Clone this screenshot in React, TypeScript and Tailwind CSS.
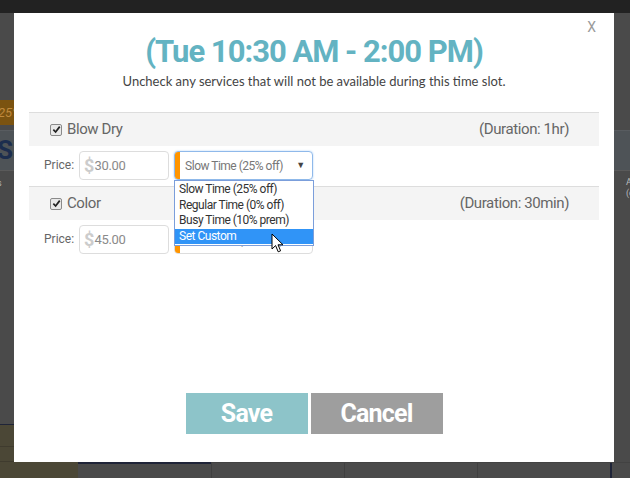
import React from 'react'

const services = [
  { name: 'Blow Dry', duration: '(Duration: 1hr)', price: '30.00', open: true },
  { name: 'Color', duration: '(Duration: 30min)', price: '45.00', open: false },
]

const options = ['Slow Time (25% off)', 'Regular Time (0% off)', 'Busy Time (10% prem)', 'Set Custom']

function CheckBox() {
  return (
    <span className="flex h-[12px] w-[12px] items-center justify-center rounded-[2px] border border-[#8a8a8a] bg-[#e9e9e9]">
      <svg width="9" height="9" viewBox="0 0 10 10">
        <path d="M1.5 5.2 L4 7.8 L8.6 1.8" fill="none" stroke="#222" strokeWidth="1.9" />
      </svg>
    </span>
  )
}

function Cursor() {
  return (
    <svg width="14" height="21" viewBox="0 0 14 21" className="absolute left-[96px] top-[52px] z-30">
      <path
        d="M1 1 L1 16 L4.6 12.6 L7.2 18.8 L9.6 17.8 L7 11.8 L12 11.8 Z"
        fill="#fff"
        stroke="#000"
        strokeWidth="1"
        strokeLinejoin="round"
      />
    </svg>
  )
}

function PriceSelect({ open }: { open: boolean }) {
  return (
    <div className="relative ml-[5px]">
      <div
        className={`flex h-[29px] w-[139px] items-center overflow-hidden rounded-[4px] border ${
          open ? 'border-[#8fb9ea] shadow-[0_0_2px_#a9cdf5]' : 'border-[#dddddd]'
        }`}
      >
        <span className="h-full w-[5px] bg-[#ff9500]" />
        <span className="ml-[5px] flex-1 text-[12px] tracking-[-0.5px] text-[#777]">Slow Time (25% off)</span>
        <span className="mr-[7px] text-[9px] text-[#444]">▼</span>
      </div>
      {open && (
        <div className="absolute left-0 top-[29px] z-20 w-[140px] border border-[#7b9edb] bg-white py-[1px]">
          {options.map((o, i) => (
            <div
              key={o}
              className={`h-[15.5px] pl-[4px] text-[12px] leading-[15.5px] tracking-[-0.5px] ${
                i === 3 ? 'bg-[#3094f7] text-white' : 'text-[#333]'
              }`}
            >
              {o}
            </div>
          ))}
          <Cursor />
        </div>
      )}
    </div>
  )
}

export default function App() {
  return (
    <div className="relative h-[478px] w-[630px] overflow-hidden bg-[#4a4a4a] font-['Roboto',sans-serif]">
      {/* page behind the overlay */}
      <div className="h-[13px] bg-[#222222]" />
      <div className="h-[87px]" />
      <div className="flex h-[25px]">
        <div className="w-[14px] overflow-hidden bg-[#7b5310] text-[13px] italic leading-[25px] text-[#c08a3c]">
          <span className="-ml-[2px] block whitespace-nowrap">25%</span>
        </div>
      </div>
      <div className="h-[5px]" />
      <div className="flex h-[40px] items-center border-t border-[#585c60] bg-[#4e5357]">
        <span className="-ml-[3px] text-[26px] font-bold text-[#1c2d4e]">Su</span>
      </div>
      <div className="flex h-[30px] justify-between border-t border-[#5a5a5a] pt-[6px] text-[9px] text-[#bbbbbb]">
        <span className="-ml-[3px]">s</span>
        <span className="mr-[-4px] leading-[11px]">
          Al
          <br />
          (c
        </span>
      </div>
      <div className="h-[224px]" />
      <div className="flex h-[54px]">
        <div className="flex w-[78px] flex-col border-t border-[#1f2438] bg-[#4b4736]">
          <div className="h-[22px] border-b border-[#3f3b2e]" />
          <div className="h-[15px] border-b border-[#3f3b2e]" />
        </div>
        <div className="w-[134px] border-r border-[#3f3f3f]">
          <div className="h-[40px] border-b-2 border-x border-[#1f2438]" />
        </div>
        <div className="flex flex-1 flex-col justify-end">
          <div className="flex h-[16px] border-t border-[#424242]">
            <div className="w-[133px] border-r border-[#3f3f3f]" />
            <div className="w-[133px] border-r border-[#3f3f3f]" />
            <div className="w-[134px] border-r-2 border-[#1f2438]" />
          </div>
        </div>
      </div>

      {/* modal */}
      <div className="absolute left-[14px] top-[13px] flex h-[449px] w-[600px] flex-col bg-white">
        <span className="absolute right-[18px] top-[4px] text-[14px] text-[#9a9a9a]">X</span>
        <h1 className="mt-[21px] text-center text-[31px] font-bold leading-[36px] tracking-[-1px] text-[#63b3c2]">
          (Tue 10:30 AM - 2:00 PM)
        </h1>
        <p className="mt-[3px] text-center font-['Lato',sans-serif] text-[13px] leading-[16px] text-[#444]">
          Uncheck any services that will not be available during this time slot.
        </p>

        <div className="mx-[15px] mt-[23px]">
          {services.map((s) => (
            <div key={s.name}>
              <div className="flex h-[34px] items-center border-t border-[#dddddd] bg-[#f4f4f4] pl-[21px] pr-[30px] text-[15px] tracking-[-0.4px] text-[#666]">
                <CheckBox />
                <span className="ml-[5px] flex-1">{s.name}</span>
                <span>{s.duration}</span>
              </div>
              <div className="flex h-[40px] items-start pl-[15px] pt-[5px]">
                <span className="mt-[5px] text-[12px] text-[#666]">Price:</span>
                <div className="ml-[5px] flex h-[29px] w-[90px] items-center rounded-[4px] border border-[#dddddd] pl-[4px]">
                  <span className="text-[18px] font-bold leading-none text-[#cccccc]">$</span>
                  <span className="text-[13px] tracking-[-0.3px] text-[#8a8a8a]">{s.price}</span>
                </div>
                <PriceSelect open={s.open} />
              </div>
            </div>
          ))}
        </div>

        <div className="mt-[133px] flex justify-center gap-[3px]">
          <button className="h-[41px] w-[122px] bg-[#8dc4c9] text-[25px] font-bold tracking-[-0.8px] text-white">
            Save
          </button>
          <button className="h-[41px] w-[132px] bg-[#9e9e9e] text-[25px] font-bold tracking-[-0.8px] text-white">
            Cancel
          </button>
        </div>
      </div>
    </div>
  )
}
